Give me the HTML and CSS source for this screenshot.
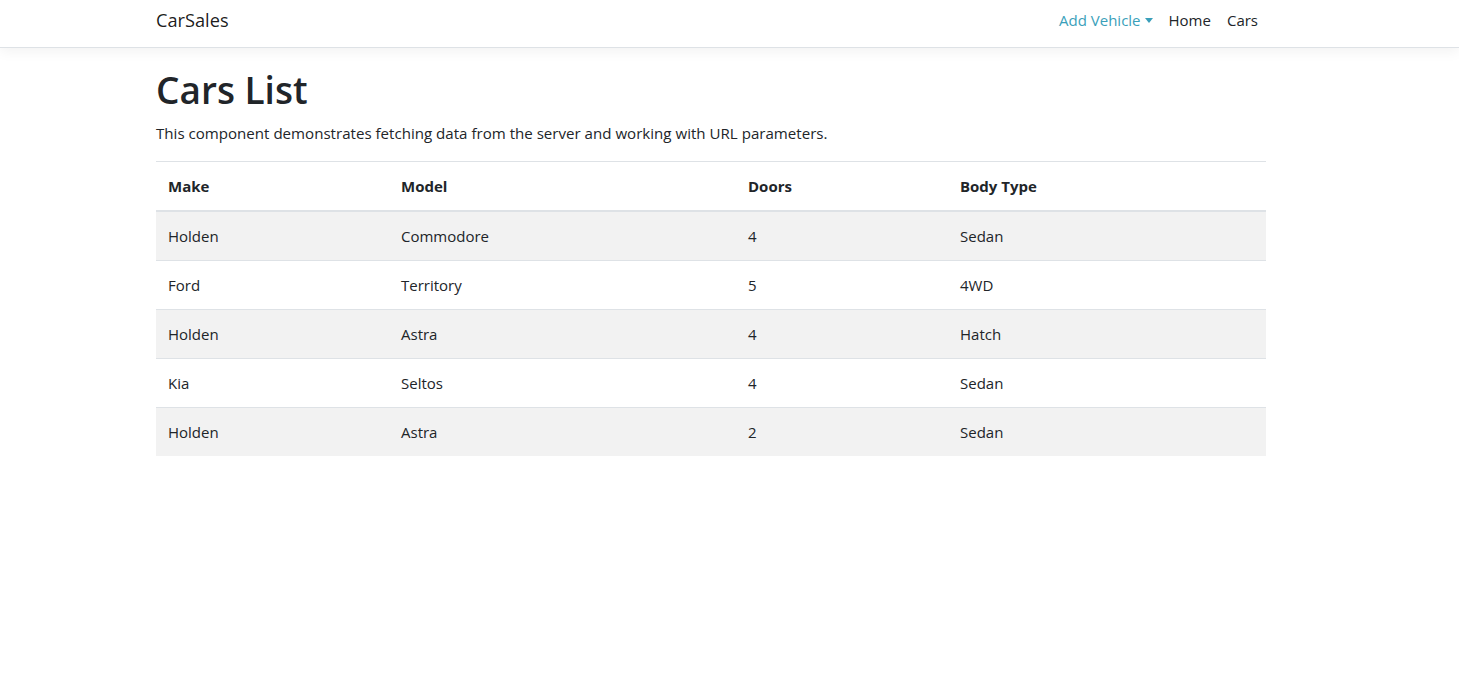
FILE: index.html
```html
<!DOCTYPE html>
<html lang="en">
<head>
<meta charset="utf-8">
<title>CarSales</title>
<link rel="stylesheet" href="styles.css">
</head>
<body>
<header class="navbar">
  <div class="container nav-inner">
    <a class="brand" href="#">CarSales</a>
    <ul class="nav">
      <li><a class="nav-link nav-link-accent" href="#">Add Vehicle<span class="caret"></span></a></li>
      <li><a class="nav-link" href="#">Home</a></li>
      <li><a class="nav-link" href="#">Cars</a></li>
    </ul>
  </div>
</header>
<main class="container">
  <h1 class="title">Cars List</h1>
  <p class="lead-text">This component demonstrates fetching data from the server and working with URL parameters.</p>
  <table class="table">
    <thead>
      <tr><th class="c1">Make</th><th class="c2">Model</th><th class="c3">Doors</th><th class="c4">Body Type</th></tr>
    </thead>
    <tbody>
      <tr><td>Holden</td><td>Commodore</td><td>4</td><td>Sedan</td></tr>
      <tr><td>Ford</td><td>Territory</td><td>5</td><td>4WD</td></tr>
      <tr><td>Holden</td><td>Astra</td><td>4</td><td>Hatch</td></tr>
      <tr><td>Kia</td><td>Seltos</td><td>4</td><td>Sedan</td></tr>
      <tr><td>Holden</td><td>Astra</td><td>2</td><td>Sedan</td></tr>
    </tbody>
  </table>
</main>
</body>
</html>
```
FILE: styles.css
```css
* { box-sizing: border-box; }
html, body { margin: 0; padding: 0; }
body {
  font-family: "Open Sans", "Noto Sans", sans-serif;
  font-size: 16px;
  line-height: 1.5;
  color: #212529;
  background: #fff;
}
.container {
  width: 1110px;
  margin-left: 156px;
}
.navbar {
  height: 48px;
  border-bottom: 1px solid #dee2e6;
  box-shadow: 0 4px 12px rgba(0,0,0,.05);
  margin-bottom: 20px;
  background: #fff;
}
.nav-inner {
  height: 47px;
  display: flex;
  align-items: center;
  justify-content: space-between;
}
.brand {
  font-size: 18.2px;
  color: rgba(0,0,0,.9);
  text-decoration: none;
  line-height: 1;
  margin-top: -6px;
}
.nav {
  list-style: none;
  margin: 0;
  padding: 0;
  display: flex;
  margin-top: -7px;
}
.nav-link {
  display: block;
  padding: 0 8px;
  font-size: 15px;
  color: #212529;
  text-decoration: none;
}
.nav-link-accent { color: #3a9fba; }
.caret {
  display: inline-block;
  margin-left: 4px;
  vertical-align: 3px;
  border-top: 5px solid #3a9fba;
  border-left: 4.5px solid transparent;
  border-right: 4.5px solid transparent;
}
.title {
  font-size: 37px;
  font-weight: 600;
  line-height: 1.2;
  margin: 0 0 10px;
}
.lead-text {
  margin: 0 0 16px;
  font-size: 15.1px;
}
.table {
  width: 1110px;
  border-collapse: collapse;
  font-size: 15px;
}
.table th, .table td {
  text-align: left;
  padding: 12px;
  line-height: 24px;
  border-top: 1px solid #dee2e6;
}
.table th { font-weight: 700; }
.table thead th { border-bottom: 2px solid #dee2e6; }
.table tbody tr:nth-child(odd) { background: #f2f2f2; }
.c1 { width: 233px; }
.c2 { width: 347px; }
.c3 { width: 212px; }
.c4 { width: 318px; }
```
